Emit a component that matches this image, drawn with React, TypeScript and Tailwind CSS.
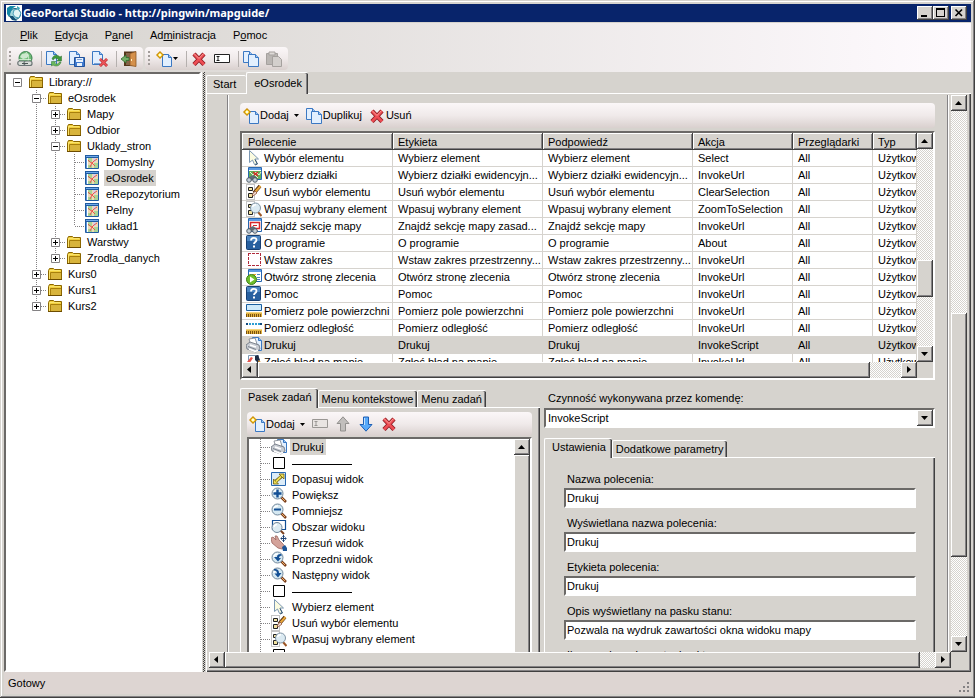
import React from 'react';

// 3D edges of the classic window theme
const raised =
  'bg-[#d6d3ce] shadow-[inset_-1px_-1px_#404040,inset_1px_1px_#ffffff,inset_-2px_-2px_#848284]';
const sunken =
  'border-2 border-t-[#6b6967] border-l-[#6b6967] border-r-white border-b-white';
const strip =
  'flex items-center rounded-sm bg-linear-to-b from-[#fbf7f8] via-[#f0eaea] to-[#d9d0ce]';

type IconProps = { children: React.ReactNode; w?: number; h?: number };

const Svg = ({ children, w = 16, h = 16 }: IconProps) => (
  <svg width={w} height={h} viewBox={`0 0 ${w} ${h}`} className="shrink-0" aria-hidden="true">
    {children}
  </svg>
);

const LogoIcon = () => (
  <Svg>
    <rect width="16" height="16" fill="#fff" />
    <circle cx="9" cy="9" r="5.500" fill="#a5d7dd" stroke="#1a5f80" />
    <path d="M8 5l4-1 3 4-2 5-4-1-2-3z" fill="#e4f5f5" stroke="#2b8ca8" strokeWidth=".8" />
    <path d="M1 3l3-2h6l-3 2-2 3-2 6-2-3z" fill="#1388a6" />
    <path d="M3 11l3 4 5 1-4-5z" fill="#145074" />
    <path d="M11 1l3 2-1 2-2-2z" fill="#39a8ba" />
  </Svg>
);

const FolderIcon = () => (
  <Svg>
    <path d="M1.500 4.500l1-2h4l1 1h7v10h-13z" fill="#f1cf3e" stroke="#8c6700" />
    <path d="M4 7h10v6H4z" fill="#d8b43c" />
    <path d="M3.500 13V6.500H14" fill="none" stroke="#a87f0c" />
    <path d="M2.500 13V4.500H13" fill="none" stroke="#fbe46d" />
    <path d="M1 13.500h14" stroke="#6d4c00" />
  </Svg>
);

const LayoutIcon = () => (
  <Svg w={14}>
    <path d="M0.500 1.500h13v13h-13z" fill="#d7e6ba" stroke="#205ba0" />
    <path d="M3 4h10v10H3z" fill="#efd9b4" />
    <path d="M3 4h4v4H3zM9 9h4v5H9zM3 11h4v3H3z" fill="#a9d495" />
    <path d="M8 4h3v4H8z" fill="#d8cfe4" />
    <path d="M3 6l2 2 2 1 2-2 3-2M7 9l-2 4M7 9l3 3" fill="none" stroke="#e8554b" />
    <path d="M0 1h14v3H0z" fill="#205ba0" />
    <path d="M1 2h12v1H1z" fill="#6ea8ea" />
    <path d="M2.500 4v10" stroke="#fff" />
    <path d="M1.500 4v10" stroke="#5c93d5" />
  </Svg>
);

const Page = ({ x = 0, y = 0, w = 10, h = 12 }: { x?: number; y?: number; w?: number; h?: number }) => (
  <g transform={`translate(${x} ${y})`}>
    <path d={`M.5 .5h${w - 4}l3 3v${h - 4}h-${w - 1}z`} fill="#e2effe" stroke="#3b78c3" />
    <path d={`M${w - 3.5} .5v3h3`} fill="#9ec6f4" stroke="#3b78c3" />
  </g>
);

const NewIcon = () => (
  <Svg>
    <Page x={6} y={3} w={10} h={13} />
    <path d="M4 0l4 4-4 4-4-4z" fill="#c98900" />
    <path d="M4 1.500l2.500 2.500L4 6.500 1.500 4z" fill="#ffe45c" />
    <path d="M3 3h2v2H3z" fill="#fffde0" />
  </Svg>
);

const CopyIcon = () => (
  <Svg>
    <Page x={0} y={0} w={10} h={12} />
    <Page x={5} y={3} w={11} h={13} />
  </Svg>
);

const PasteIcon = () => (
  <Svg>
    <path d="M.5 2.500h11v11H.5z" fill="#bab6b3" stroke="#a5a19e" />
    <path d="M3 1h6v3H3z" fill="#dedad7" stroke="#a5a19e" />
    <path d="M6.500 5.500h6l3 3v7h-9z" fill="#d3cfcc" stroke="#a5a19e" />
  </Svg>
);

const CrossIcon = () => (
  <Svg>
    <path d="M3 3l10 10.500M13 3L3 13.500" stroke="#8e1d24" strokeWidth="4.400" />
    <path d="M3 3l10 10.500M13 3L3 13.500" stroke="#ee4d54" strokeWidth="2.600" />
    <path d="M3 2.500l5 5L12.500 2.500" stroke="#f79a95" fill="none" />
  </Svg>
);

const RenameIcon = ({ off }: { off?: boolean }) => (
  <Svg>
    <path d="M.5 3.500h15v8H.5z" fill={off ? '#e9e4e2' : '#fff'} stroke={off ? '#9a9794' : '#222'} />
    <path d="M2.500 5.500h3M2.500 9.500h3M4 5.500v4" stroke={off ? '#9a9794' : '#222'} />
  </Svg>
);

const GlobeIcon = () => (
  <Svg>
    <circle cx="8.500" cy="7" r="6.500" fill="#6ebb77" stroke="#3d8350" />
    <path d="M5 3l4-1 3 2-2 3-4 1-3-2z" fill="#cde8ce" />
    <path d="M2 8.500h12M9 1c4 4 3 9 0 12" stroke="#e1f3df" fill="none" strokeWidth=".8" />
    <rect x=".8" y="10" width="8" height="4.500" rx="2" fill="#d8dcd8" stroke="#6b7475" strokeWidth="1.200" />
    <rect x="7" y="10" width="8" height="4.500" rx="2" fill="#d8dcd8" stroke="#6b7475" strokeWidth="1.200" />
    <path d="M5 12.500h6" stroke="#4c5455" />
  </Svg>
);

const RefreshIcon = () => (
  <Svg>
    <Page x={0} y={0} w={11} h={14} />
    <path d="M6 8c1-4 5-5 8-2l1.500-1V10H11l1.500-1.500C10 6.500 8 7 7.500 9z" fill="#3f9a3d" stroke="#2b6e2c" strokeWidth=".5" />
    <path d="M15 11c-1 4-5 5-8 3l-1.500 1V10.500H10L8.500 12c2 2 4 1 5-1z" fill="#69b95c" stroke="#2b6e2c" strokeWidth=".5" />
  </Svg>
);

const SavePageIcon = () => (
  <Svg>
    <Page x={0} y={0} w={11} h={14} />
    <path d="M5.500 6.500h10v9h-10z" fill="#3f79cf" stroke="#24529b" />
    <path d="M7 7h7v4H7zM8 12h5v3H8z" fill="#e9f1fc" />
    <path d="M8 8.500h5" stroke="#7da2d6" />
  </Svg>
);

const DeletePageIcon = () => (
  <Svg>
    <Page x={0} y={0} w={11} h={14} />
    <path d="M2 12.500h6" stroke="#7da2d6" />
    <path d="M8 8l7 7M15 8l-7 7" stroke="#b52a30" strokeWidth="2.800" />
    <path d="M8 8l7 7M15 8l-7 7" stroke="#f0565a" strokeWidth="1.500" />
  </Svg>
);

const DoorIcon = () => (
  <Svg>
    <path d="M3 .5h12v14.500H3z" fill="#55361b" />
    <path d="M5 2h5v12H5z" fill="#86644a" />
    <path d="M9 2.500l6-2v15l-6-1z" fill="#d5904b" stroke="#8c5725" strokeWidth=".8" />
    <path d="M10.500 8v2" stroke="#fff3c4" />
    <path d="M8 6.500H5V4L0 8l5 4V9.500h3z" fill="#74ad68" stroke="#2d6d2d" strokeWidth=".8" />
  </Svg>
);

const UpIcon = () => (
  <Svg>
    <path d="M8 .8l6 6.700h-3.500V15h-5V7.500H2z" fill="#c1bebc" stroke="#92908e" />
  </Svg>
);

const DownIcon = () => (
  <Svg>
    <path d="M8 15.200l6-6.700h-3.500V1h-5v7.500H2z" fill="#58aafa" stroke="#1d5fb5" />
    <path d="M6.500 2v7" stroke="#bfe0ff" />
  </Svg>
);

const CursorIcon = () => (
  <Svg>
    <path d="M3.500 .5v12l3-2.500 2 4.500 2.500-1-2-4.500h3.500z" fill="#fbfbe0" stroke="#7d98b3" />
    <path d="M9 9.500l2.500 4.500-2.500 1" stroke="#35556f" fill="none" />
  </Svg>
);

const Lens = () => (
  <>
    <path d="M10 10l5 5" stroke="#7b3f1c" strokeWidth="2.500" />
    <path d="M11 11l3 3" stroke="#f0b26c" />
    <circle cx="6.500" cy="6.500" r="5.500" fill="#d6e9f2" stroke="#71879a" />
    <path d="M3 6c0-2 2-3.500 4-3" stroke="#fff" strokeWidth="1.500" fill="none" />
  </>
);

const Binoculars = () => (
  <>
    <path d="M4 9.500l3-1.500 3 2 2 3-3 1-2-2-2 2-4-1z" fill="#5f6d78" />
    <circle cx="3" cy="13" r="2.300" fill="#c3ced7" stroke="#46525d" strokeWidth=".9" />
    <circle cx="9" cy="13" r="2.300" fill="#c3ced7" stroke="#46525d" strokeWidth=".9" />
  </>
);

const ParcelIcon = () => (
  <Svg>
    <path d="M2.500 .5h13v12h-13z" fill="#fff" stroke="#2767b0" />
    <path d="M3 1h12v2H3z" fill="#5c9be4" />
    <path d="M3 4h12v8H3z" fill="#62b158" />
    <path d="M4 5l3 3 3-3 3 3 2-3M5 10l3-3 4 4" stroke="#e8f4d8" fill="none" />
    <path d="M7 5l5 4M12 5L8 8" stroke="#d5302b" strokeWidth="1.500" />
    <Binoculars />
  </Svg>
);

const SectionIcon = () => (
  <Svg>
    <path d="M2.500 .5h13v13h-13z" fill="#fff" stroke="#2767b0" />
    <path d="M3 1h12v2H3z" fill="#5c9be4" />
    <path d="M4.500 4.500h9v6h-9z" fill="#fff" stroke="#d8292b" strokeWidth="1.500" />
    <path d="M7 7.500h4" stroke="#d8292b" />
    <Binoculars />
  </Svg>
);

const ClearIcon = () => (
  <Svg>
    <path d="M.5 .5h8v15h-8z" fill="none" stroke="#8a8a8a" strokeDasharray="1 1" />
    <path d="M2.500 3.500h4v3h-4zM2.500 9.500h4v4h-4z" fill="#f2e2a0" stroke="#222" />
    <path d="M8 9l6-7" stroke="#5b3311" strokeWidth="3.500" />
    <path d="M9.500 7.500L14.500 2" stroke="#e9a73a" strokeWidth="2" />
    <path d="M6 11l3-4 2 2-4 3z" fill="#f3e3d6" stroke="#96543c" strokeWidth=".8" />
  </Svg>
);

const FitIcon = () => (
  <Svg>
    <path d="M.5 .5h8v15h-8z" fill="none" stroke="#8a8a8a" strokeDasharray="1 1" />
    <path d="M2.500 3.500h3v3h-3zM2.500 9.500h4v4h-4z" fill="#f2e2a0" stroke="#222" />
    <path d="M12 11l3.500 4" stroke="#9c5625" strokeWidth="2" />
    <circle cx="9.500" cy="7" r="5" fill="#dbeaf2" stroke="#8195a5" />
    <path d="M6.500 6c.5-1.500 2-2.500 3.500-2" stroke="#fff" strokeWidth="1.500" fill="none" />
  </Svg>
);

const HelpIcon = () => (
  <Svg>
    <rect x=".5" y=".5" width="14" height="14" rx="1" fill="#28609f" stroke="#173f72" />
    <path d="M1 1h13v5H1z" fill="#4c86c2" />
    <path d="M5 5.500c0-3.500 5.500-3.500 5.500-.5 0 2-2.500 2-2.500 4" fill="none" stroke="#fff" strokeWidth="1.800" />
    <path d="M7 10.500h2v2H7z" fill="#fff" />
  </Svg>
);

const ExtentIcon = () => (
  <Svg>
    <path d="M2 1.500h13M2 13.500h13M2.500 1v13M14.500 1v13" stroke="#b02a3a" strokeDasharray="3 1" />
  </Svg>
);

const OpenPageIcon = () => (
  <Svg>
    <path d="M2.500 .5h13v12h-13z" fill="#fff" stroke="#2767b0" />
    <path d="M3 1h12v2H3z" fill="#5c9be4" />
    <path d="M7 5.500h3M7 8.500h3" stroke="#e8a531" />
    <path d="M11 5.500h3M11 8.500h3M11 10.500h3" stroke="#4f84c7" />
    <circle cx="5.500" cy="10.500" r="5" fill="#6fbf2b" stroke="#3c7d17" />
    <path d="M4 7.500l4.500 3L4 13.500z" fill="#fff" />
  </Svg>
);

const Ruler = () => (
  <>
    <path d="M0 9h16v5H0z" fill="#e4b441" />
    <path d="M0 9.500h16" stroke="#f5d67c" />
    <path d="M0 12.500h16" stroke="#7a5210" strokeWidth="3" strokeDasharray="1 1" />
  </>
);

const AreaIcon = () => (
  <Svg>
    <path d="M.5 1.500h15v6H.5z" fill="#cfeafa" stroke="#1b5f9e" />
    <Ruler />
  </Svg>
);

const DistanceIcon = () => (
  <Svg>
    <path d="M0 4h16" stroke="#2f9ed2" strokeWidth="2" strokeDasharray="2 1" />
    <path d="M0 3h2v2H0zM14 3h2v2h-2z" fill="#124a7d" />
    <Ruler />
  </Svg>
);

const PrintIcon = () => (
  <Svg>
    <Page x={6} y={0} w={10} h={14} />
    <path d="M3 2l6-1 2 6-6 2z" fill="#fff" stroke="#7b828c" strokeWidth=".8" />
    <path d="M0 8l4-3 9 3 1 4-4 3-9-3z" fill="#c8ccd3" stroke="#666d79" strokeWidth=".8" />
    <path d="M4 8l6 2M3 12l6 2.500 3-1" stroke="#fff" strokeWidth="1.500" fill="none" />
    <path d="M2 9.500l8 3" stroke="#7b828c" />
  </Svg>
);

const ReportIcon = () => (
  <Svg>
    <path d="M2.500 1.500h10v13h-10z" fill="#fff" stroke="#7d98b3" />
    <path d="M1 8l4-5 2 1-4 6z" fill="#e8534a" />
    <path d="M9 2l3-1 2 5-2 3-3-3z" fill="#1b2b44" />
    <path d="M12 6l3 2-2 2z" fill="#e89b2d" />
  </Svg>
);

const BlankIcon = () => (
  <Svg>
    <path d="M2.500 2.500h11v11h-11z" fill="#fff" stroke="#000" />
  </Svg>
);

const FitWindowIcon = () => (
  <Svg>
    <path d="M.5 1.500h14v13H.5z" fill="#dcecf8" stroke="#2767b0" />
    <path d="M4 11l7-6" stroke="#6b5b12" strokeWidth="3.500" />
    <path d="M2.500 8v5h5zM8 3h5v5z" fill="#f0e156" stroke="#6b5b12" strokeWidth=".8" />
    <path d="M5 10.500l5-5" stroke="#f0e156" strokeWidth="1.800" />
  </Svg>
);

const ZoomInIcon = () => (
  <Svg>
    <Lens />
    <path d="M6.500 2.500v8M2.500 6.500h8" stroke="#134f95" strokeWidth="2.400" />
  </Svg>
);

const ZoomOutIcon = () => (
  <Svg>
    <Lens />
    <path d="M3 6.500h7" stroke="#134f95" strokeWidth="2" />
  </Svg>
);

const ZoomAreaIcon = () => (
  <Svg>
    <path d="M1.500 1.500h13v9h-13z" fill="#fff" stroke="#134f95" strokeWidth="1.200" />
    <path d="M9 11l4 4" stroke="#7b3f1c" strokeWidth="2" />
    <circle cx="6" cy="8.500" r="5" fill="#dcebf2" stroke="#71879a" />
    <path d="M3 8c.5-2 2-2.500 3-2.500" stroke="#fff" strokeWidth="1.500" fill="none" />
  </Svg>
);

const PanIcon = () => (
  <Svg>
    <path d="M0 3l2-1 3 3-1-4 2 0 2 4 4 4 2 3-3 2-4-1-6-5z" fill="#d4a39b" stroke="#9b655e" strokeWidth=".8" />
    <path d="M11 12l3-2 2 3v3h-4z" fill="#1e5597" />
    <path d="M12.500 0v7M9.500 3.500h6" stroke="#1e4477" />
    <path d="M11 1.500h3M11 5.500h3M10.500 2v3M14.500 2v3" stroke="#1e4477" strokeWidth=".6" />
  </Svg>
);

const PrevViewIcon = () => (
  <Svg>
    <Lens />
    <path d="M10 3c-3 0-4 1-4 3H3l4 4.500L10 7H8c0-1.500 1-2.500 3-2.500z" fill="#134f95" />
  </Svg>
);

const NextViewIcon = () => (
  <Svg>
    <Lens />
    <path d="M3 2c4 0 5 1.500 5 4h2.500L7 10.500 3.500 6.500H6C6 4.500 5 3.500 3 3.500z" fill="#134f95" />
  </Svg>
);

// One cell of the dotted connector lines, with an optional expander box
type Glyph = 'blank' | 'line' | 'tee' | 'corner' | 'plus' | 'plusLast' | 'minus' | 'root';

const TreeGlyph = ({ kind }: { kind: Glyph }) => {
  const last = kind === 'corner' || kind === 'plusLast';
  const box = kind === 'plus' || kind === 'plusLast' || kind === 'minus' || kind === 'root';
  const lines = kind !== 'blank' && kind !== 'root';
  return (
    <svg width="19" height="16" viewBox="0 0 19 16" className="shrink-0" aria-hidden="true">
      {lines && <path d={last ? 'M9.500 0v8' : 'M9.500 0v16'} stroke="#848284" strokeDasharray="1 1" />}
      {lines && kind !== 'line' && <path d="M10 8.500h9" stroke="#848284" strokeDasharray="1 1" />}
      {box && (
        <>
          <path d="M5.500 4.500h8v8h-8z" fill="#fff" stroke="#848284" />
          <path d="M7 8.500h5" stroke="#000" />
          {(kind === 'plus' || kind === 'plusLast') && <path d="M9.500 6v5" stroke="#000" />}
        </>
      )}
    </svg>
  );
};

type TreeItem = {
  glyphs: Glyph[];
  label?: string;
  icon: React.ComponentType;
  selected?: boolean;
};

const library: TreeItem[] = [
  { glyphs: ['root'], label: 'Library://', icon: FolderIcon },
  { glyphs: ['blank', 'minus'], label: 'eOsrodek', icon: FolderIcon },
  { glyphs: ['blank', 'line', 'plus'], label: 'Mapy', icon: FolderIcon },
  { glyphs: ['blank', 'line', 'plus'], label: 'Odbior', icon: FolderIcon },
  { glyphs: ['blank', 'line', 'minus'], label: 'Uklady_stron', icon: FolderIcon },
  { glyphs: ['blank', 'line', 'line', 'tee'], label: 'Domyslny', icon: LayoutIcon },
  { glyphs: ['blank', 'line', 'line', 'tee'], label: 'eOsrodek', icon: LayoutIcon, selected: true },
  { glyphs: ['blank', 'line', 'line', 'tee'], label: 'eRepozytorium', icon: LayoutIcon },
  { glyphs: ['blank', 'line', 'line', 'tee'], label: 'Pelny', icon: LayoutIcon },
  { glyphs: ['blank', 'line', 'line', 'corner'], label: 'układ1', icon: LayoutIcon },
  { glyphs: ['blank', 'line', 'plus'], label: 'Warstwy', icon: FolderIcon },
  { glyphs: ['blank', 'line', 'plusLast'], label: 'Zrodla_danych', icon: FolderIcon },
  { glyphs: ['blank', 'plus'], label: 'Kurs0', icon: FolderIcon },
  { glyphs: ['blank', 'plus'], label: 'Kurs1', icon: FolderIcon },
  { glyphs: ['blank', 'plusLast'], label: 'Kurs2', icon: FolderIcon },
];

const taskBar: TreeItem[] = [
  { glyphs: ['tee'], label: 'Drukuj', icon: PrintIcon, selected: true },
  { glyphs: ['tee'], icon: BlankIcon },
  { glyphs: ['tee'], label: 'Dopasuj widok', icon: FitWindowIcon },
  { glyphs: ['tee'], label: 'Powiększ', icon: ZoomInIcon },
  { glyphs: ['tee'], label: 'Pomniejsz', icon: ZoomOutIcon },
  { glyphs: ['tee'], label: 'Obszar widoku', icon: ZoomAreaIcon },
  { glyphs: ['tee'], label: 'Przesuń widok', icon: PanIcon },
  { glyphs: ['tee'], label: 'Poprzedni widok', icon: PrevViewIcon },
  { glyphs: ['tee'], label: 'Następny widok', icon: NextViewIcon },
  { glyphs: ['tee'], icon: BlankIcon },
  { glyphs: ['tee'], label: 'Wybierz element', icon: CursorIcon },
  { glyphs: ['tee'], label: 'Usuń wybór elementu', icon: ClearIcon },
  { glyphs: ['tee'], label: 'Wpasuj wybrany element', icon: FitIcon },
  { glyphs: ['tee'], icon: BlankIcon },
];

const Tree = ({ items, name }: { items: TreeItem[]; name: string }) => (
  <ul aria-label={name} className="min-w-0 flex-1 pl-0.5">
    {items.map((item, i) => {
      const Icon = item.icon;
      return (
        <li key={i} className="flex h-4 items-center leading-4">
          {item.glyphs.map((g, j) => (
            <TreeGlyph key={j} kind={g} />
          ))}
          <span className="mr-[3px] ml-px w-4 shrink-0">
            <Icon />
          </span>
          {item.label ? (
            <span className={item.selected ? 'bg-[#d6d3ce] px-0.5' : 'px-0.5'}>{item.label}</span>
          ) : (
            <span className="mx-0.5 mt-0.5 h-px w-15 bg-black" />
          )}
        </li>
      );
    })}
  </ul>
);

const arrows = {
  up: 'M4 10h7L7.500 6z',
  down: 'M4 6h7l-3.500 4z',
  left: 'M9 4v7L5 7.500z',
  right: 'M6 4v7l4-3.500z',
};

const ArrowButton = ({ dir }: { dir: keyof typeof arrows }) => (
  <button type="button" aria-label={dir} className={`size-4 shrink-0 ${raised}`}>
    <Svg>
      <path d={arrows[dir]} fill="#000" />
    </Svg>
  </button>
);

type ScrollBarProps = { vertical?: boolean; before: number; thumb: number; after: number };

const ScrollBar = ({ vertical, before, thumb, after }: ScrollBarProps) => (
  <div
    className={`flex shrink-0 bg-[repeating-conic-gradient(#ffffff_0_25%,#d6d3ce_0_50%)] bg-size-[2px_2px] ${
      vertical ? 'w-4 flex-col' : 'h-4'
    }`}
  >
    <ArrowButton dir={vertical ? 'up' : 'left'} />
    <div style={{ flexGrow: before }} />
    <div className={raised} style={{ flexGrow: thumb }} />
    <div style={{ flexGrow: after }} />
    <ArrowButton dir={vertical ? 'down' : 'right'} />
  </div>
);

const Tab = ({ label, active }: { label: string; active?: boolean }) => (
  <button
    type="button"
    role="tab"
    aria-selected={!!active}
    className={`rounded-t-xs border-t border-l border-t-white border-l-white bg-[#d6d3ce] whitespace-nowrap shadow-[inset_-1px_0_#404040,inset_-2px_0_#848284] ${
      active ? 'relative -mb-px h-5 pr-1.5 pb-0.5 pl-[7px]' : 'h-[17px] pr-1 pl-[3px]'
    }`}
  >
    {label}
  </button>
);

const Caret = () => (
  <svg width="5" height="3" viewBox="0 0 5 3" aria-hidden="true">
    <path d="M0 0h5L2.500 3z" />
  </svg>
);

const Grip = () => (
  <span className="-mr-px h-4 w-0.5 bg-[repeating-linear-gradient(#a39d9b_0_2px,transparent_2px_4px)]" />
);

const Divider = () => <span className="-mr-[3px] ml-px h-4 w-px bg-[#b5b0ae]" />;

const ToolButton = ({ name, children }: { name: string; children: React.ReactNode }) => (
  <button type="button" aria-label={name} className="flex items-center gap-px">
    {children}
  </button>
);

type Command = {
  icon: React.ComponentType;
  name: string;
  label: string;
  hint: string;
  action: string;
  selected?: boolean;
};

const commands: Command[] = [
  { icon: CursorIcon, name: 'Wybór elementu', label: 'Wybierz element', hint: 'Wybierz element', action: 'Select' },
  { icon: ParcelIcon, name: 'Wybierz działki', label: 'Wybierz działki ewidencyjn...', hint: 'Wybierz działki ewidencyjn...', action: 'InvokeUrl' },
  { icon: ClearIcon, name: 'Usuń wybór elementu', label: 'Usuń wybór elementu', hint: 'Usuń wybór elementu', action: 'ClearSelection' },
  { icon: FitIcon, name: 'Wpasuj wybrany element', label: 'Wpasuj wybrany element', hint: 'Wpasuj wybrany element', action: 'ZoomToSelection' },
  { icon: SectionIcon, name: 'Znajdź sekcję mapy', label: 'Znajdź sekcję mapy zasad...', hint: 'Znajdź sekcję mapy', action: 'InvokeUrl' },
  { icon: HelpIcon, name: 'O programie', label: 'O programie', hint: 'O programie', action: 'About' },
  { icon: ExtentIcon, name: 'Wstaw zakres', label: 'Wstaw zakres przestrzenny...', hint: 'Wstaw zakres przestrzenny...', action: 'InvokeUrl' },
  { icon: OpenPageIcon, name: 'Otwórz stronę zlecenia', label: 'Otwórz stronę zlecenia', hint: 'Otwórz stronę zlecenia', action: 'InvokeUrl' },
  { icon: HelpIcon, name: 'Pomoc', label: 'Pomoc', hint: 'Pomoc', action: 'InvokeUrl' },
  { icon: AreaIcon, name: 'Pomierz pole powierzchni', label: 'Pomierz pole powierzchni', hint: 'Pomierz pole powierzchni', action: 'InvokeUrl' },
  { icon: DistanceIcon, name: 'Pomierz odległość', label: 'Pomierz odległość', hint: 'Pomierz odległość', action: 'InvokeUrl' },
  { icon: PrintIcon, name: 'Drukuj', label: 'Drukuj', hint: 'Drukuj', action: 'InvokeScript', selected: true },
  { icon: ReportIcon, name: 'Zgłoś błąd na mapie', label: 'Zgłoś błąd na mapie', hint: 'Zgłoś błąd na mapie', action: 'InvokeUrl' },
];

const columns = ['Polecenie', 'Etykieta', 'Podpowiedź', 'Akcja', 'Przeglądarki', 'Typ'];
const cell =
  'overflow-hidden border-r border-b border-[#d6d3ce] p-0 pt-px pl-[5px] leading-[15px] whitespace-nowrap first:pl-1';

const CommandTable = () => (
  <div className={`mt-[3px] flex h-[249px] flex-col bg-[#d6d3ce] ${sunken}`}>
    <div className="flex min-h-0 flex-1">
      <div className="min-w-0 flex-1 overflow-hidden bg-white">
        <table className="w-full table-fixed border-separate border-spacing-0">
          <colgroup>
            <col className="w-[151px]" />
            <col className="w-[150px]" />
            <col className="w-[150px]" />
            <col className="w-[100px]" />
            <col className="w-[80px]" />
            <col />
          </colgroup>
          <thead>
            <tr>
              {columns.map((c) => (
                <th
                  key={c}
                  scope="col"
                  className={`h-[17px] p-0 pl-[5px] text-left leading-4 font-normal first:pl-1.5 ${raised}`}
                >
                  {c}
                </th>
              ))}
            </tr>
          </thead>
          <tbody>
            {commands.map((cmd) => {
              const Icon = cmd.icon;
              return (
                <tr key={cmd.name} className={cmd.selected ? 'bg-[#d6d3ce]' : 'bg-white'}>
                  <td className={cell}>
                    <span className="flex h-[15px] items-end gap-0.5">
                      <Icon />
                      {cmd.name}
                    </span>
                  </td>
                  <td className={cell}>{cmd.label}</td>
                  <td className={cell}>{cmd.hint}</td>
                  <td className={cell}>{cmd.action}</td>
                  <td className={cell}>All</td>
                  <td className={cell}>Użytkownika</td>
                </tr>
              );
            })}
          </tbody>
        </table>
      </div>
      <ScrollBar vertical before={112} thumb={37} after={49} />
    </div>
    <div className="flex">
      <div className="flex-1">
        <ScrollBar before={0} thumb={613} after={31} />
      </div>
      <div className="w-4" />
    </div>
  </div>
);

const fields = [
  { id: 'name', label: 'Nazwa polecenia:', value: 'Drukuj' },
  { id: 'display', label: 'Wyświetlana nazwa polecenia:', value: 'Drukuj' },
  { id: 'caption', label: 'Etykieta polecenia:', value: 'Drukuj' },
  { id: 'status', label: 'Opis wyświetlany na pasku stanu:', value: 'Pozwala na wydruk zawartości okna widoku mapy' },
  { id: 'icon', label: 'Ikona polecenia w stanie aktywnym:', value: '' },
];

const TaskPane = () => (
  <div className="w-[300px] shrink-0">
    <div role="tablist" className="flex h-[19px] items-end">
      <Tab label="Pasek zadań" active />
      <Tab label="Menu kontekstowe" />
      <Tab label="Menu zadań" />
    </div>
    <div className="border-t border-l border-white pt-1 pr-2 pb-2 pl-1.5 shadow-[inset_-1px_0_#404040,inset_-2px_0_#848284]">
      <div className={`h-6 gap-[7px] pl-0.5 ${strip}`}>
        <ToolButton name="Dodaj">
          <NewIcon />
          <span className="pr-1">Dodaj</span>
          <Caret />
        </ToolButton>
        <ToolButton name="Zmień nazwę">
          <RenameIcon off />
        </ToolButton>
        <ToolButton name="W górę">
          <UpIcon />
        </ToolButton>
        <ToolButton name="W dół">
          <DownIcon />
        </ToolButton>
        <ToolButton name="Usuń">
          <CrossIcon />
        </ToolButton>
      </div>
      <div className={`mt-px flex h-64 bg-white ${sunken}`}>
        <Tree items={taskBar} name="Pasek zadań" />
        <ScrollBar vertical before={0} thumb={1} after={0} />
      </div>
    </div>
  </div>
);

const CommandForm = () => (
  <form className="min-w-0 flex-1">
    <label htmlFor="action" className="block h-5 pl-1 leading-5">
      Czynność wykonywana przez komendę:
    </label>
    <div className={`flex h-5 bg-white ${sunken}`}>
      <select id="action" defaultValue="InvokeScript" className="min-w-0 flex-1 appearance-none pl-0.5 leading-4 outline-none">
        <option>InvokeScript</option>
        <option>InvokeUrl</option>
      </select>
      <ArrowButton dir="down" />
    </div>
    <div role="tablist" className="mt-2.5 flex h-[19px] items-end">
      <Tab label="Ustawienia" active />
      <Tab label="Dodatkowe parametry" />
    </div>
    <div className="flex flex-col gap-2 border-t border-l border-white px-[19px] pt-3.5 pb-4 shadow-[inset_-1px_0_#404040,inset_-2px_0_#848284]">
      {fields.map((f) => (
        <div key={f.id}>
          <label htmlFor={f.id} className="block h-4 pl-[3px] leading-3.5">
            {f.label}
          </label>
          <input id={f.id} defaultValue={f.value} className={`block h-5 w-full bg-white px-px outline-none ${sunken}`} />
        </div>
      ))}
    </div>
  </form>
);

const Editor = () => (
  <div className="mr-0.5 ml-[18px] border-r border-l border-r-white border-l-[#848284]">
    <div className="border-r border-l border-r-[#848284] border-l-white pt-2 pr-3 pl-[11px]">
      <div className={`h-[25px] gap-[7px] pl-[3px] ${strip}`}>
        <ToolButton name="Dodaj">
          <NewIcon />
          <span className="pr-1">Dodaj</span>
          <Caret />
        </ToolButton>
        <ToolButton name="Duplikuj">
          <CopyIcon />
          <span>Duplikuj</span>
        </ToolButton>
        <ToolButton name="Usuń">
          <CrossIcon />
          <span>Usuń</span>
        </ToolButton>
      </div>
      <CommandTable />
      <div className="mt-2 flex gap-1">
        <TaskPane />
        <CommandForm />
      </div>
    </div>
  </div>
);

const TitleBar = () => (
  <header className="flex h-[18px] items-center bg-[#08246b] pr-1 pl-0.5 text-white">
    <LogoIcon />
    <h1 className="flex-1 pl-px font-['Noto_Sans'] text-[11px] leading-4 font-bold">
      GeoPortal Studio - http://pingwin/mapguide/
    </h1>
    <button type="button" aria-label="Minimize" className={`h-3.5 w-4 ${raised}`}>
      <Svg h={14}>
        <path d="M4 9h6v2H4z" />
      </Svg>
    </button>
    <button type="button" aria-label="Maximize" className={`h-3.5 w-4 ${raised}`}>
      <Svg h={14}>
        <path d="M3 2h9v9H3zM4 4v6h7V4z" fillRule="evenodd" />
      </Svg>
    </button>
    <button type="button" aria-label="Close" className={`ml-0.5 h-3.5 w-4 ${raised}`}>
      <Svg h={14}>
        <path d="M4.500 3.500l6.500 6.500M11 3.500L4.500 10" stroke="#000" strokeWidth="1.600" />
      </Svg>
    </button>
  </header>
);

const MenuBar = () => (
  <nav className="flex h-6 items-center gap-[17px] pl-4">
    <a href="#plik">
      <u>P</u>lik
    </a>
    <a href="#edycja">
      <u>E</u>dycja
    </a>
    <a href="#panel">
      P<u>a</u>nel
    </a>
    <a href="#administracja">
      Ad<u>m</u>inistracja
    </a>
    <a href="#pomoc">
      P<u>o</u>moc
    </a>
  </nav>
);

const MainToolBar = () => (
  <div className="flex h-[25px] gap-0.5 pb-0.5 pl-[3px]">
    <div className={`gap-[7px] pr-1.5 pl-0.5 ${strip}`}>
      <Grip />
      <ToolButton name="Połącz">
        <GlobeIcon />
      </ToolButton>
      <Divider />
      <ToolButton name="Odśwież">
        <RefreshIcon />
      </ToolButton>
      <ToolButton name="Zapisz">
        <SavePageIcon />
      </ToolButton>
      <ToolButton name="Zamknij">
        <DeletePageIcon />
      </ToolButton>
      <Divider />
      <ToolButton name="Wyjście">
        <DoorIcon />
      </ToolButton>
    </div>
    <div className={`gap-[7px] pr-1.5 pl-[3px] ${strip}`}>
      <Grip />
      <ToolButton name="Nowy">
        <NewIcon />
        <Caret />
      </ToolButton>
      <Divider />
      <ToolButton name="Usuń">
        <CrossIcon />
      </ToolButton>
      <ToolButton name="Zmień nazwę">
        <RenameIcon />
      </ToolButton>
      <Divider />
      <ToolButton name="Kopiuj">
        <CopyIcon />
      </ToolButton>
      <ToolButton name="Wklej">
        <PasteIcon />
      </ToolButton>
    </div>
  </div>
);

const App: React.FC = () => {
  return (
    <div className="flex h-screen flex-col bg-[#d6d3ce] p-1 font-['Liberation_Sans',sans-serif] text-[11px] text-black shadow-[inset_-1px_-1px_#404040,inset_1px_1px_#d6d3ce,inset_-2px_-2px_#848284,inset_2px_2px_#ffffff]">
      <TitleBar />
      <div className="mt-px bg-linear-to-r from-[#d6d3ce] to-[#fffbff]">
        <MenuBar />
        <MainToolBar />
      </div>

      <main className="flex min-h-0 flex-1">
        <aside className={`flex w-[197px] shrink-0 bg-white ${sunken}`}>
          <Tree items={library} name="Library" />
        </aside>
        <div className="w-[5px] shrink-0 border-l border-white bg-[#d6d3ce] pl-px">
          <div className="h-full w-0.5 bg-[repeating-conic-gradient(#404040_0_25%,#d6d3ce_0_50%)] bg-size-[2px_2px]" />
        </div>

        <section className="flex min-w-0 flex-1 flex-col">
          <div role="tablist" className="flex h-[21px] shrink-0 items-end">
            <button type="button" role="tab" aria-selected="false" className="h-[18px] rounded-t-xs border-t border-l border-white pr-2.5 pl-1.5">
              Start
            </button>
            <button
              type="button"
              role="tab"
              aria-selected="true"
              className="relative -mb-px h-[22px] rounded-t-xs border-t border-l border-white bg-[#d6d3ce] pr-1.5 pl-[7px] shadow-[inset_-1px_0_#404040,inset_-2px_0_#848284]"
            >
              eOsrodek
            </button>
          </div>
          <div className="flex min-h-0 flex-1 flex-col border-t border-l border-white pt-px pr-1 pb-1 pl-0.5 shadow-[inset_-1px_-1px_#404040,inset_-2px_-2px_#848284]">
            <div className="flex min-h-0 flex-1">
              <div className="min-w-0 flex-1 overflow-hidden">
                <Editor />
              </div>
              <ScrollBar vertical before={202} thumb={244} after={79} />
            </div>
            <div className="flex">
              <div className="flex-1">
                <ScrollBar before={0} thumb={695} after={15} />
              </div>
              <div className="w-4" />
            </div>
          </div>
        </section>
      </main>

      <footer className="flex h-[22px] shrink-0 items-center justify-between bg-[#ddd5d2] pl-1">
        <span>Gotowy</span>
        <svg width="12" height="12" viewBox="0 0 12 12" className="self-end" aria-hidden="true">
          <path d="M8 0h2v2H8zM4 4h2v2H4zM8 4h2v2H8zM0 8h2v2H0zM4 8h2v2H4zM8 8h2v2H8z" fill="#848284" />
        </svg>
      </footer>
    </div>
  );
};

export default App;
